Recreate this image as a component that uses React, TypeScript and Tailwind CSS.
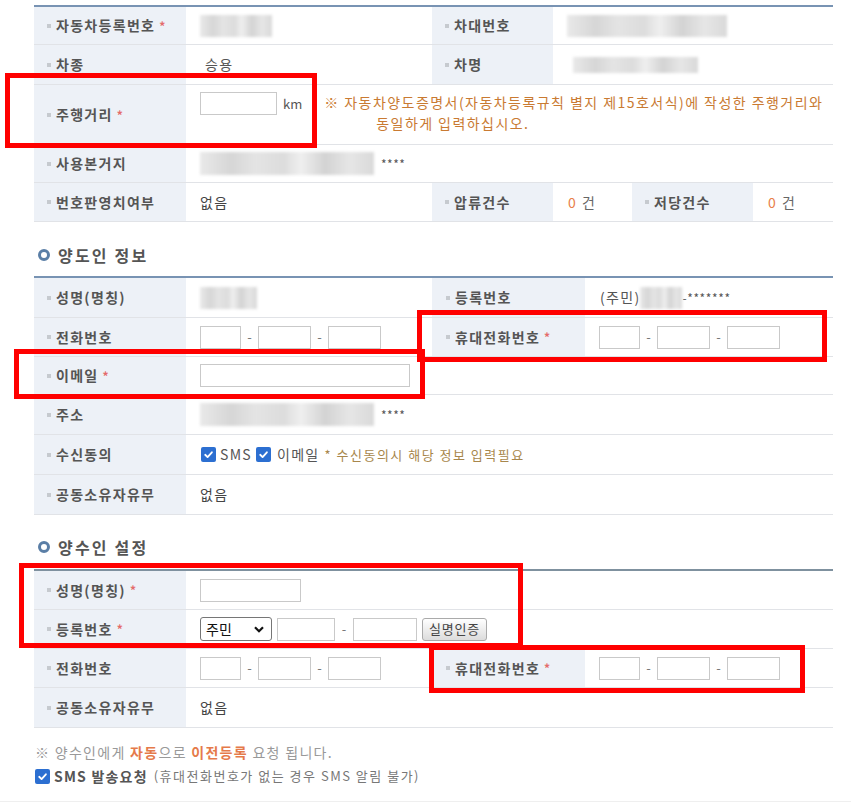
import React from 'react'

const font = "font-['Noto_Sans_CJK_KR','Liberation_Sans',sans-serif]"

function Label({ children, req, pl = 'pl-[13px]' }: { children: React.ReactNode; req?: boolean; pl?: string }) {
  return (
    <div className={`flex items-center bg-[#edf1f7] ${pl} text-[14px] font-bold tracking-[1.3px] text-[#555]`}>
      <span className="mr-[5px] h-[4px] w-[4px] shrink-0 bg-[#c6cacf]" />
      <span className="whitespace-nowrap">{children}</span>
      {req && <span className="ml-[4px] text-[12px] text-[#e46b6b]">*</span>}
    </div>
  )
}

function Val({ children, className = '' }: { children?: React.ReactNode; className?: string }) {
  return <div className={`flex items-center pl-[14px] text-[14px] tracking-[1.3px] text-[#444] ${className}`}>{children}</div>
}

function Box({ w }: { w: string }) {
  return <input readOnly className={`h-[23px] ${w} border border-[#c9c9c9] bg-white outline-none`} />
}

function Dash() {
  return <span className="w-[17px] text-center text-[13px] tracking-normal text-[#777]">-</span>
}

function Phone() {
  return (
    <div className="flex items-center">
      <Box w="w-[41px]" />
      <Dash />
      <Box w="w-[53px]" />
      <Dash />
      <Box w="w-[53px]" />
    </div>
  )
}

function Blur({ w, h = 'h-[22px]' }: { w: string; h?: string }) {
  return (
    <span
      className={`inline-block ${w} ${h} blur-[1.5px] bg-[linear-gradient(90deg,#e9e9e9_0%,#d6d6d6_18%,#e4e4e4_32%,#dcdcdc_48%,#efefef_58%,#d3d3d3_72%,#e6e6e6_86%,#d9d9d9_100%)]`}
    />
  )
}

function Check() {
  return (
    <span className="inline-flex h-[15px] w-[15px] shrink-0 items-center justify-center rounded-[2px] bg-[#2c6fd1]">
      <svg viewBox="0 0 12 12" className="h-[11px] w-[11px]">
        <path d="M2.4 6.3 5 8.8 9.7 3.6" fill="none" stroke="#fff" strokeWidth="2" strokeLinecap="round" strokeLinejoin="round" />
      </svg>
    </span>
  )
}

function Heading({ children, className = '' }: { children: React.ReactNode; className?: string }) {
  return (
    <div className={`flex h-[22px] items-center pl-[38px] ${className}`}>
      <span className="h-[12px] w-[12px] rounded-full border-[3px] border-[#5a7ea6]" />
      <span className="ml-[8px] text-[16px] font-bold tracking-[2.2px] text-[#555]">{children}</span>
    </div>
  )
}

const row = 'grid border-b border-[#e1e3e7]'
const cols4 = 'grid-cols-[152px_246px_153px_1fr]'

export default function App() {
  return (
    <div className={`relative h-[802px] w-[851px] overflow-hidden bg-white pt-[5px] ${font}`}>
      {/* 차량 정보 */}
      <div className="ml-[34px] w-[799px] border-t-2 border-[#7893b3]">
        <div className={`${row} h-[38px] grid-cols-[152px_246px_121px_1fr]`}>
          <Label req>자동차등록번호</Label>
          <Val className="pl-[11px]"><Blur w="w-[72px]" /></Val>
          <Label>차대번호</Label>
          <Val className="pl-[12px]"><Blur w="w-[160px]" /></Val>
        </div>
        <div className={`${row} h-[40px] grid-cols-[152px_246px_121px_1fr]`}>
          <Label>차종</Label>
          <Val className="pl-[19px] text-[#555]">승용</Val>
          <Label>차명</Label>
          <Val className="pl-[20px]"><Blur w="w-[125px]" h="h-[16px]" /></Val>
        </div>
        <div className={`${row} h-[60px] grid-cols-[152px_1fr]`}>
          <Label req>주행거리</Label>
          <div className="flex items-start pl-[14px] pt-[7px]">
            <Box w="w-[77px]" />
            <span className="ml-[6px] mt-[2px] text-[13px] text-[#555]">km</span>
            <div className="ml-[22px] whitespace-nowrap text-[14px] leading-[21px] tracking-[1.45px] text-[#c97a32]">
              <div>※ 자동차양도증명서(자동차등록규칙 별지 제15호서식)에 작성한 주행거리와</div>
              <div className="pl-[52px]">동일하게 입력하십시오.</div>
            </div>
          </div>
        </div>
        <div className={`${row} h-[38px] grid-cols-[152px_1fr]`}>
          <Label>사용본거지</Label>
          <Val className="pl-[7px]">
            <Blur w="w-[174px]" h="h-[23px]" />
            <span className="ml-[7px] text-[12px] tracking-[0.5px] text-[#555]">****</span>
          </Val>
        </div>
        <div className={`${row} h-[39px] grid-cols-[152px_246px_121px_79px_121px_1fr]`}>
          <Label>번호판영치여부</Label>
          <Val>없음</Val>
          <Label>압류건수</Label>
          <Val className="pl-[15px]"><span className="text-[#e8804a]">0</span><span className="ml-[5px] text-[#666]">건</span></Val>
          <Label>저당건수</Label>
          <Val className="pl-[15px]"><span className="text-[#e8804a]">0</span><span className="ml-[5px] text-[#666]">건</span></Val>
        </div>
      </div>

      {/* 양도인 정보 */}
      <Heading className="mt-[22px] mb-[10px]">양도인 정보</Heading>
      <div className="ml-[34px] w-[799px] border-t-2 border-[#7893b3]">
        <div className={`${row} h-[40px] ${cols4}`}>
          <Label>성명(명칭)</Label>
          <Val className="pl-[7px]"><Blur w="w-[57px]" /></Val>
          <Label pl="pl-[14px]">등록번호</Label>
          <Val className="pl-[15px] text-[#555]">
            (주민)<Blur w="w-[42px]" /><span className="text-[12px] tracking-[0.6px]">-*******</span>
          </Val>
        </div>
        <div className={`${row} h-[39px] ${cols4}`}>
          <Label>전화번호</Label>
          <Val><Phone /></Val>
          <Label req pl="pl-[14px]">휴대전화번호</Label>
          <Val><Phone /></Val>
        </div>
        <div className={`${row} h-[38px] grid-cols-[152px_1fr]`}>
          <Label req>이메일</Label>
          <Val><Box w="w-[210px]" /></Val>
        </div>
        <div className={`${row} h-[40px] grid-cols-[152px_1fr]`}>
          <Label>주소</Label>
          <Val className="pl-[7px]">
            <Blur w="w-[174px]" h="h-[23px]" />
            <span className="ml-[7px] text-[12px] tracking-[0.5px] text-[#555]">****</span>
          </Val>
        </div>
        <div className={`${row} h-[40px] grid-cols-[152px_1fr]`}>
          <Label>수신동의</Label>
          <Val className="pl-[15px]">
            <Check />
            <span className="ml-[4px] text-[#555]">SMS</span>
            <span className="ml-[4px]"><Check /></span>
            <span className="ml-[6px] text-[#555]">이메일</span>
            <span className="ml-[5px] text-[13px] tracking-[1.5px] text-[#a8874c]">* 수신동의시 해당 정보 입력필요</span>
          </Val>
        </div>
        <div className={`${row} h-[40px] grid-cols-[152px_1fr]`}>
          <Label>공동소유자유무</Label>
          <Val>없음</Val>
        </div>
      </div>

      {/* 양수인 설정 */}
      <Heading className="mt-[21px] mb-[11px]">양수인 설정</Heading>
      <div className="ml-[34px] w-[799px] border-t-2 border-[#7f919f]">
        <div className={`${row} h-[39px] grid-cols-[152px_1fr]`}>
          <Label req>성명(명칭)</Label>
          <Val><Box w="w-[101px]" /></Val>
        </div>
        <div className={`${row} h-[39px] grid-cols-[152px_1fr]`}>
          <Label req>등록번호</Label>
          <Val>
            <div className="flex h-[24px] w-[72px] items-center justify-between rounded-[3px] border border-[#767676] bg-white pl-[5px] pr-[7px] text-[14px] tracking-normal text-[#111]">
              주민
              <svg viewBox="0 0 10 7" className="h-[7px] w-[10px]">
                <path d="M1 1.2 5 5.2 9 1.2" fill="none" stroke="#111" strokeWidth="2.2" />
              </svg>
            </div>
            <span className="ml-[5px] flex items-center">
              <Box w="w-[58px]" />
              <span className="w-[18px] text-center text-[13px] tracking-normal text-[#777]">-</span>
              <Box w="w-[64px]" />
            </span>
            <span className="ml-[5px] flex h-[23px] w-[65px] items-center justify-center rounded-[3px] border border-[#aaa] bg-gradient-to-b from-white to-[#dcdcdc] text-[13px] tracking-[0.8px] text-[#444]">
              실명인증
            </span>
          </Val>
        </div>
        <div className={`${row} h-[39px] ${cols4}`}>
          <Label>전화번호</Label>
          <Val><Phone /></Val>
          <Label req pl="pl-[14px]">휴대전화번호</Label>
          <Val><Phone /></Val>
        </div>
        <div className={`${row} h-[40px] grid-cols-[152px_1fr]`}>
          <Label>공동소유자유무</Label>
          <Val>없음</Val>
        </div>
      </div>

      <div className="ml-[35px] mt-[14px] h-[20px] text-[14px] leading-[20px] tracking-[1.3px] text-[#999]">
        ※ 양수인에게 <b className="text-[#e57a4a]">자동</b>으로 <b className="text-[#e57a4a]">이전등록</b> 요청 됩니다.
      </div>
      <div className="ml-[35px] mt-[4px] flex h-[20px] items-center">
        <Check />
        <span className="ml-[4px] text-[14px] font-bold tracking-[1.2px] text-[#555]">SMS 발송요청</span>
        <span className="ml-[6px] text-[13px] tracking-[1.5px] text-[#777]">(휴대전화번호가 없는 경우 SMS 알림 불가)</span>
      </div>
      <div className="mt-[15px] h-[6px] w-full bg-[#efefef]" />

      {/* 표시 박스 */}
      <div className="absolute left-[5px] top-[73px] h-[75px] w-[312px] border-[5px] border-[#ff0000]" />
      <div className="absolute left-[14px] top-[349px] h-[50px] w-[411px] border-[5px] border-[#ff0000]" />
      <div className="absolute left-[417px] top-[310px] h-[52px] w-[410px] border-[5px] border-[#ff0000]" />
      <div className="absolute left-[19px] top-[563px] h-[85px] w-[504px] border-[5px] border-[#ff0000]" />
      <div className="absolute left-[429px] top-[645px] h-[48px] w-[376px] border-[5px] border-[#ff0000]" />
    </div>
  )
}
